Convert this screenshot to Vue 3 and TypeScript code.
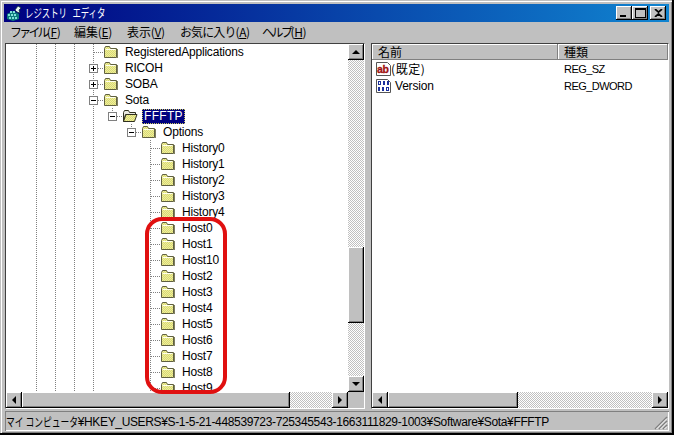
<script setup lang="ts">
interface Row {
  label: string
  guides: string[]
  exp?: 'plus' | 'minus'
  open?: boolean
  selected?: boolean
}
const base = ['v', 'v', 'v']
const hist = [...base, 'v', '', '', 'tee']
const names = ['History0', 'History1', 'History2', 'History3', 'History4', 'Host0', 'Host1', 'Host10', 'Host2', 'Host3', 'Host4', 'Host5', 'Host6', 'Host7', 'Host8', 'Host9']
const rows: Row[] = [
  { label: 'RegisteredApplications', guides: [...base, 'tee'] },
  { label: 'RICOH', guides: [...base, 'tee'], exp: 'plus' },
  { label: 'SOBA', guides: [...base, 'tee'], exp: 'plus' },
  { label: 'Sota', guides: [...base, 'tee'], exp: 'minus' },
  { label: 'FFFTP', guides: [...base, 'v', 'tee-end'], exp: 'minus', open: true, selected: true },
  { label: 'Options', guides: [...base, 'v', '', 'tee-end'], exp: 'minus' },
  ...names.map((label) => ({ label, guides: hist })),
]
const menus = [
  { pre: 'ファイル', key: 'F', cls: 'm1' },
  { pre: '編集', key: 'E', cls: 'm2' },
  { pre: '表示', key: 'V', cls: 'm3' },
  { pre: 'お気に入り', key: 'A', cls: 'm4' },
  { pre: 'ヘルプ', key: 'H', cls: 'm5' },
]
</script>

<template>
  <div class="window">
    <svg class="defs" width="0" height="0">
      <defs>
        <pattern id="dith" width="2" height="2" patternUnits="userSpaceOnUse">
          <rect width="2" height="2" fill="#f2f294" />
          <rect width="1" height="1" fill="#d6d67c" />
          <rect x="1" y="1" width="1" height="1" fill="#d6d67c" />
        </pattern>
      </defs>
    </svg>
    <header class="titlebar">
      <svg class="appicon" width="16" height="16" viewBox="0 0 16 16">
        <path d="M1 9l6-3 6 3v5l-6 2-6-2z" fill="#0c7c7c" />
        <path d="M2 9h2v2H2zM5 9h2v2H5zM8 9h2v2H8zM3 12h2v2H3zM6 12h2v2H6zM9 12h2v2H9zM4 6h2v2H4zM7 6h2v2H7z" fill="#7fe0d8" />
        <path d="M9 5l3-4 3 2-2 2 1 3-3-1z" fill="#e8f4f4" stroke="#063030" stroke-width=".7" />
      </svg>
      <span class="title">レジストリ エディタ</span>
      <div class="capbtns">
        <button class="capbtn"><span class="min"></span></button>
        <button class="capbtn"><span class="max"></span></button>
        <button class="capbtn close">
          <svg width="9" height="8" viewBox="0 0 9 8"><path d="M1 0l3.5 3.2L8 0M1 8l3.5-3.2L8 8" fill="none" stroke="#000" stroke-width="1.7" /></svg>
        </button>
      </div>
    </header>

    <nav class="menubar">
      <span v-for="m in menus" :key="m.key" class="menu" :class="m.cls"><span class="pre">{{ m.pre }}</span>(<u>{{ m.key }}</u>)</span>
    </nav>

    <div class="panes">
      <section class="pane tree-pane">
        <div class="tree">
          <div v-for="r in rows" :key="r.label" class="row">
            <span v-for="(g, i) in r.guides" :key="i" class="cell" :class="g">
              <span v-if="r.exp && i === r.guides.length - 1" class="exp" :class="r.exp"></span>
            </span>
            <svg v-if="r.open" class="folder" width="16" height="14" viewBox="0 0 16 14">
              <path d="M1.500 3.500l1-2h4l1 2h6v2h-10l-2 7z" fill="#e8e8e0" stroke="#303020" />
              <path d="M1.500 12.500l2.500-7h11l-2.500 7z" fill="url(#dith)" stroke="#303020" />
            </svg>
            <svg v-else class="folder" width="16" height="14" viewBox="0 0 16 14">
              <path d="M1.500 12.500v-9l1-2h4l1 2h6v9z" fill="url(#dith)" stroke="#606040" />
              <path d="M14.500 4v9" stroke="#808060" fill="none" />
              <path d="M2.500 4.500h10" stroke="#fffff0" />
            </svg>
            <span class="label" :class="{ sel: r.selected }">{{ r.label }}</span>
          </div>
        </div>
        <div class="vbar">
          <span class="arrow up-btn"><i class="tri up"></i></span>
          <div class="vtrack">
            <span class="vthumb"></span>
          </div>
          <span class="arrow down-btn"><i class="tri down"></i></span>
        </div>
        <div class="hbar">
          <span class="arrow"><i class="tri left"></i></span>
          <span class="hthumb tree-thumb"></span>
          <div class="htrack"></div>
          <span class="arrow"><i class="tri right"></i></span>
        </div>
        <div class="corner"></div>
        <div class="highlight"></div>
      </section>

      <section class="pane list-pane">
        <div class="listhead">
          <span class="col name">名前</span>
          <span class="col type">種類</span>
        </div>
        <div class="list">
          <div class="lrow">
            <span class="lname">
              <svg class="licon" width="16" height="16" viewBox="0 0 16 16">
                <path d="M.5 1.500h11l3 3v10H.5z" fill="#fff" stroke="#555" />
                <text x="1" y="11.500" class="abtext">ab</text>
              </svg>
              <span class="lt1">(既定)</span>
            </span>
            <span class="ltype">REG_SZ</span>
          </div>
          <div class="lrow">
            <span class="lname">
              <svg class="licon" width="16" height="16" viewBox="0 0 16 16">
                <path d="M.5 1.500h11l3 3v10H.5z" fill="#fff" stroke="#555" />
                <path d="M2 3h3v4H2zM7 3h2v4H7zM11 3h2v4h-2zM2 9h2v4H2zM6 9h2v4H6zM10 9h3v4h-3z" fill="#1a2f9c" />
                <path d="M3 4h1v2H3zM11 10h1v2h-1z" fill="#fff" />
              </svg>
              <span class="lt2">Version</span>
            </span>
            <span class="ltype">REG_DWORD</span>
          </div>
        </div>
        <div class="hbar">
          <span class="arrow"><i class="tri left"></i></span>
          <span class="hthumb list-thumb"></span>
          <div class="htrack"></div>
          <span class="arrow"><i class="tri right"></i></span>
        </div>
      </section>
    </div>

    <footer class="status">
      <span class="status-kana">マイ コンピュータ</span><span class="status-text">¥HKEY_USERS¥S-1-5-21-448539723-725345543-1663111829-1003¥Software¥Sota¥FFFTP</span>
      <svg class="grip" width="14" height="14" viewBox="0 0 14 14">
        <path d="M13 1L1 13M13 5L5 13M13 9L9 13" stroke="#808080" stroke-width="1.500" />
        <path d="M13 2.500L2.500 13M13 6.500L6.500 13M13 10.500L10.500 13" stroke="#fff" />
      </svg>
    </footer>
  </div>
</template>

<style>
html, body { margin: 0; background: #c0c0c0; }
</style>

<style scoped>
.defs { position: absolute; }
.window {
  box-sizing: border-box;
  width: 674px;
  height: 435px;
  padding: 4px 5px 4px 4px;
  display: flex;
  flex-direction: column;
  background: #c0c0c0;
  font: 12px/16px "Liberation Sans", "Noto Sans CJK JP", sans-serif;
  color: #000;
  overflow: hidden;
  box-shadow: inset -2px -2px #000, inset 1px 1px #c0c0c0, inset 2px 2px #fff, inset -3px -3px #808080;
}
.titlebar {
  height: 18px;
  flex: none;
  display: flex;
  align-items: center;
  background: linear-gradient(90deg, #000080 0%, #1084d0 100%);
  color: #fff;
  padding: 0 3px 0 2px;
}
.appicon { flex: none; margin-top: -1px; }
.title {
  display: inline-block;
  margin-left: 3px;
  transform: scaleX(.7);
  transform-origin: left center;
  white-space: nowrap;
  word-spacing: 5px;
  font-size: 12px;
  line-height: 16px;
  font-family: "Noto Sans CJK JP", sans-serif;
}
.capbtns { margin-left: auto; display: flex; }
.capbtn {
  width: 16px;
  height: 14px;
  padding: 0;
  border: 0;
  background: #c0c0c0;
  position: relative;
  display: flex;
  align-items: center;
  justify-content: center;
  box-shadow: inset -1px -1px #000, inset 1px 1px #fff, inset -2px -2px #808080;
}
.capbtn.close { margin-left: 2px; }
.min { position: absolute; left: 4px; bottom: 3px; width: 6px; height: 2px; background: #000; }
.max { width: 9px; height: 7px; border: 1px solid #000; border-top-width: 2px; box-sizing: content-box; }
.menubar {
  height: 20px;
  flex: none;
  display: flex;
  align-items: center;
  font-family: "Noto Sans CJK JP", sans-serif;
  padding-left: 6px;
}
.menu { white-space: nowrap; line-height: 16px; letter-spacing: -.4px; }
.menu .pre { letter-spacing: -.1px; }
.m1 { width: 64px; }
.m1 .pre { letter-spacing: -2.800px; }
.m2 { width: 53px; }
.m3 { width: 53px; }
.m4 { width: 82px; }
.m4 .pre { letter-spacing: -.9px; }
.m5 .pre { letter-spacing: -2.500px; }

.panes { flex: 1; min-height: 0; display: flex; margin: 1px 0 0 1px; gap: 6px; }
.pane {
  position: relative;
  box-sizing: border-box;
  border-top: 1px solid #404040;
  border-left: 1px solid #404040;
  border-right: 1px solid #fff;
  border-bottom: 1px solid #fff;
}
.tree-pane {
  width: 360px;
  flex: none;
  display: grid;
  grid-template-columns: 342px 16px;
  grid-template-rows: 348px 16px;
  background: #c0c0c0;
}
.tree { background: #fff; overflow: hidden; padding-left: 21px; letter-spacing: -.19px; }
.row { height: 16px; display: flex; align-items: center; white-space: nowrap; }
.cell {
  flex: none;
  width: 19px;
  height: 16px;
  position: relative;
  --dot: repeating-linear-gradient(#808080 0 1px, transparent 1px 2px);
  --hdot: repeating-linear-gradient(90deg, #808080 0 1px, transparent 1px 2px);
}
.cell.v { background: var(--dot) 9px 0 / 1px 100% no-repeat; }
.cell.tee {
  background: var(--dot) 9px 0 / 1px 100% no-repeat, var(--hdot) 10px 8px / 9px 1px no-repeat;
}
.cell.tee-end {
  background: var(--dot) 9px 0 / 1px 8px no-repeat, var(--hdot) 10px 8px / 9px 1px no-repeat;
}
.exp {
  position: absolute;
  left: 5px;
  top: 4px;
  width: 9px;
  height: 9px;
  box-sizing: border-box;
  border: 1px solid #808080;
  background: #fff;
}
.exp::before { content: ""; position: absolute; left: 1px; top: 3px; width: 5px; height: 1px; background: #000; }
.exp.plus::after { content: ""; position: absolute; left: 3px; top: 1px; width: 1px; height: 5px; background: #000; }
.folder { flex: none; margin-left: 0; }
.label { margin-left: 5px; padding: 0 1px; line-height: 15px; height: 15px; }
.label.sel {
  background: #000080;
  color: #fff;
  outline: 1px dotted #c8c860;
  outline-offset: -1px;
  padding: 0 2px;
  margin-left: 4px;
  letter-spacing: .3px;
}
.highlight {
  position: absolute;
  left: 139px;
  top: 173px;
  width: 82px;
  height: 177px;
  box-sizing: border-box;
  border: 4px solid #e01010;
  border-radius: 17px;
  pointer-events: none;
}
.arrow {
  flex: none;
  width: 16px;
  height: 16px;
  background: #c0c0c0;
  display: flex;
  align-items: center;
  justify-content: center;
  box-shadow: inset -1px -1px #000, inset 1px 1px #fff, inset -2px -2px #808080;
}
.tri { width: 0; height: 0; border: 4px solid transparent; display: block; }
.tri.up { border-bottom-color: #000; border-top-width: 0; }
.tri.down { border-top-color: #000; border-bottom-width: 0; }
.tri.left { border-right-color: #000; border-left-width: 0; }
.tri.right { border-left-color: #000; border-right-width: 0; }
.vbar { display: flex; flex-direction: column; min-height: 0; }
.hbar { display: flex; height: 16px; }
.vtrack, .htrack {
  flex: 1;
  min-width: 0;
  background: repeating-conic-gradient(#fff 0 25%, #c0c0c0 0 50%) 0 0 / 2px 2px;
}
.vtrack { padding-top: 187px; box-sizing: border-box; }
.vthumb { display: block; height: 76px; background: #c0c0c0; box-shadow: inset -1px -1px #000, inset 1px 1px #fff, inset -2px -2px #808080; }
.hthumb { flex: none; height: 16px; background: #c0c0c0; box-shadow: inset -1px -1px #000, inset 1px 1px #fff, inset -2px -2px #808080; }
.tree-thumb { width: 268px; }
.list-thumb { width: 130px; }
.corner { background: #c0c0c0; }
.list-pane { flex: 1; min-width: 0; display: flex; flex-direction: column; background: #fff; }
.listhead {
  display: flex;
  flex: none;
  height: 16px;
  background: #c0c0c0;
  font-family: "Noto Sans CJK JP", sans-serif;
}
.col {
  box-sizing: border-box;
  padding-left: 6px;
  line-height: 15px;
  box-shadow: inset -1px -1px #808080, inset 1px 1px #fff;
}
.name { width: 186px; }
.type { flex: 1; }
.list { flex: 1; min-height: 0; }
.lrow { height: 17px; display: flex; align-items: center; }
.lname { width: 192px; flex: none; display: flex; align-items: center; padding-left: 4px; box-sizing: border-box; }
.licon { flex: none; }
.lt1 { letter-spacing: .6px; font-family: "Noto Sans CJK JP", sans-serif; margin-left: -1px; }
.lt2 { margin-left: 3px; letter-spacing: -.2px; }
.abtext { font: bold 10.500px "Liberation Sans", sans-serif; fill: #a01010; stroke: #a01010; stroke-width: .3px; letter-spacing: -.3px; }
.ltype { white-space: nowrap; font-size: 11px; letter-spacing: -.55px; }
.list-pane .hbar { flex: none; }
.status {
  flex: none;
  height: 20px;
  margin: 2px 0 0 1px;
  box-sizing: border-box;
  display: flex;
  align-items: center;
  position: relative;
  padding: 1px 0 0 1px;
  box-shadow: inset 1px 1px #808080, inset -1px -1px #fff;
  white-space: nowrap;
}
.status-kana {
  display: inline-block;
  font-family: "Noto Sans CJK JP", sans-serif;
  transform: scaleX(.73);
  transform-origin: left center;
  margin-right: -27px;
}
.status-text { letter-spacing: -.35px; }
.grip { position: absolute; right: 1px; bottom: 1px; }
</style>
